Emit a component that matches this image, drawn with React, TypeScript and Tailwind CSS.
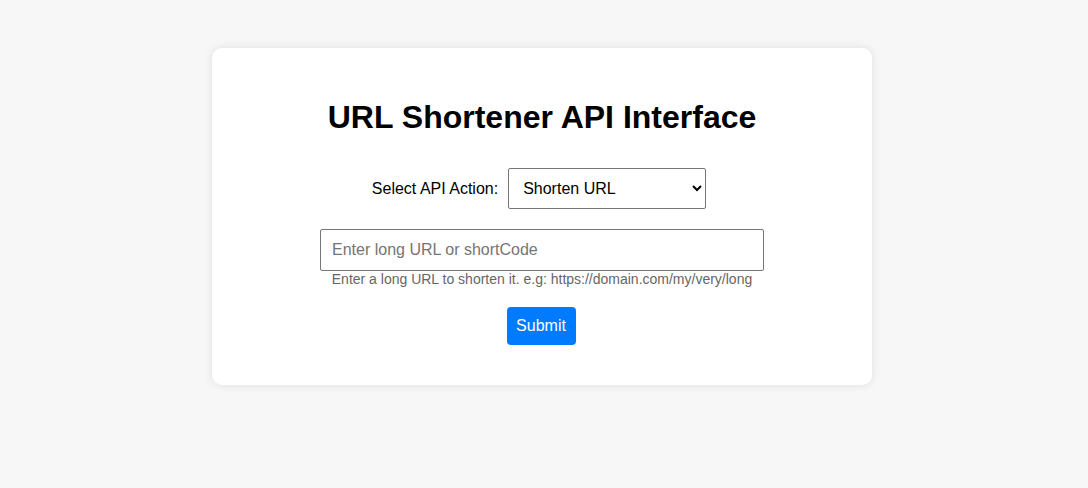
import React, { useState } from 'react';

export default function App() {
  const [action, setAction] = useState('shorten');
  const [value, setValue] = useState('');

  return (
    <div className="min-h-[488px] bg-[#f7f7f7] pt-12 font-['Liberation_Sans',Arial,sans-serif] text-black">
      <div className="ml-[212px] w-[660px] rounded-[10px] bg-white pt-[51px] pb-10 shadow-[0_0_10px_rgba(0,0,0,0.1)]">
        <h1 className="mb-[32px] text-center text-[32px] leading-[37px] font-bold">
          URL Shortener API Interface
        </h1>

        <div className="mb-5 flex items-center justify-center pr-[6px]">
          <label htmlFor="action" className="mr-[10px] text-base">
            Select API Action:
          </label>
          <select
            id="action"
            value={action}
            onChange={(e) => setAction(e.target.value)}
            className="h-[41px] w-[198px] rounded-[2px] border border-[#767676] bg-white px-[10px] text-base"
          >
            <option value="shorten">Shorten URL</option>
            <option value="expand">Expand URL</option>
            <option value="stats">Get Stats</option>
          </select>
        </div>

        <div className="flex flex-col items-center">
          <input
            type="text"
            value={value}
            onChange={(e) => setValue(e.target.value)}
            placeholder="Enter long URL or shortCode"
            className="h-[42px] w-[444px] rounded-[2px] border border-[#767676] pl-[11px] text-base placeholder:text-[#757575]"
          />
          <p className="text-[14px] leading-4 text-[#666]">
            Enter a long URL to shorten it. e.g: https://domain.com/my/very/long
          </p>
          <button className="mt-5 mr-[2px] h-[38px] w-[69px] rounded bg-[#007bff] text-base text-white">
            Submit
          </button>
        </div>
      </div>
    </div>
  );
}
